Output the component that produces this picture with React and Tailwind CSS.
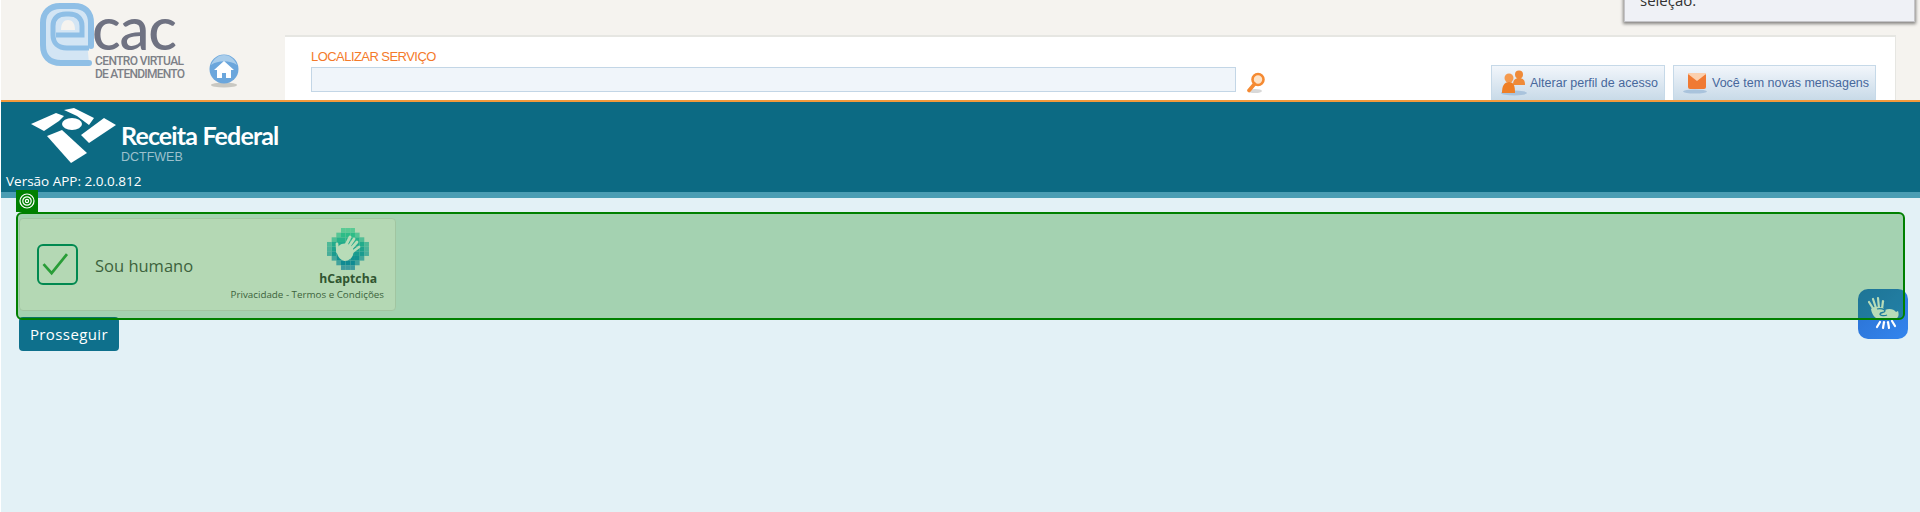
const hc = [
  "000111000",
  "001111100",
  "011111110",
  "111111111",
  "111111111",
  "111111111",
  "011111110",
  "001111100",
  "000111000",
];
const outer = (r, c) => r === 0 || c === 0 || c === 8 || r === 8 || (r === 1 && (c === 2 || c === 6)) || (r === 7 && (c === 2 || c === 6)) || (r === 2 && (c === 1 || c === 7)) || (r === 6 && (c === 1 || c === 7));

function HCaptchaLogo() {
  const colorFor = (r) => {
    const t = r / 8;
    return `rgb(${Math.round(70 - t * 55)},${Math.round(222 - t * 92)},${Math.round(185 + t * 20)})`;
  };
  return (
    <svg width="42" height="42" viewBox="0 0 42 42">
      {hc.map((row, r) =>
        row.split("").map((v, c) =>
          v === "1" ? (
            <rect key={`${r}-${c}`} x={c * 4.66} y={r * 4.66} width="4.66" height="4.66" fill={colorFor(r)} opacity={outer(r, c) ? 0.7 : 1} />
          ) : null
        )
      )}
      <g fill="none" stroke="#fff" strokeLinecap="round" strokeWidth="2.8">
        <path d="M10.5 24L10 16" />
        <path d="M18 19L23 9" />
        <path d="M21 20L27 11" />
        <path d="M23 22L30 14" />
        <path d="M24 25L32 19" />
      </g>
      <path d="M9.5 23c0-5 6-9 11-7 4 1 6 4 6 8 0 5-4 9-9 9-5-1-7-5-8-10z" fill="#fff" />
    </svg>
  );
}

function ELogo() {
  return (
    <svg width="56" height="66" viewBox="0 0 56 66" className="shrink-0">
      <path d="M50 61H22C10 61 4 54 4 43V21C4 10 11 4 21 4h14C46 4 52 10 52 21V46H30C20 50 12 44 12 34V20C14 10 44 10 46 20z" fill="#d3e5f4" />
      <path d="M50 61H22C10 61 4 54 4 43V21C4 10 11 4 21 4h14C46 4 52 10 52 21V44" fill="none" stroke="#8fbfe6" strokeWidth="6" strokeLinecap="round" />
      <path d="M50 46H28C19 46 14 41 14 33V24C14 16 19 12 27 12h3C38 12 43 16 43 24V33H17" fill="none" stroke="#8fbfe6" strokeWidth="5" />
      <path d="M22 28C22 21 25 18 29 18S36 21 36 28z" fill="#f5f3ef" />
    </svg>
  );
}

function HomeIcon() {
  return (
    <svg width="32" height="34" viewBox="0 0 32 34">
      <ellipse cx="16" cy="31" rx="13" ry="2.5" fill="#c9c8c2" />
      <circle cx="16" cy="15" r="14.5" fill="#6ba6dc" />
      <path d="M3 11C6 4 11 1 16 1s10 3 13 10c-7-5-19-5-26 0z" fill="#a9cdeb" />
      <path d="M16 7L6 16h3v8h5v-5h4v5h5v-8h3z" fill="#fff" />
    </svg>
  );
}

function SearchIcon() {
  return (
    <svg width="20" height="21" viewBox="0 0 20 21">
      <ellipse cx="9" cy="19" rx="7" ry="2" fill="#d8d8d8" />
      <circle cx="12" cy="7.5" r="5.5" fill="#fde3c8" stroke="#f58a32" strokeWidth="2.6" />
      <path d="M8.5 12L3 18.5" stroke="#f58a32" strokeWidth="3.6" strokeLinecap="round" />
    </svg>
  );
}

function PeopleIcon() {
  return (
    <svg width="28" height="26" viewBox="0 0 28 26">
      <ellipse cx="13" cy="23" rx="13" ry="2.5" fill="#a9c3dc" />
      <circle cx="18" cy="4.5" r="4" fill="#ef8a38" />
      <path d="M12 15c0-5 2-7 6-7s6 2 6 7z" fill="#ef8a38" />
      <circle cx="8" cy="8" r="4.5" fill="#f59a4e" />
      <path d="M1 23c0-7 2-11 7-11s6 4 6 11z" fill="#ef7f26" />
    </svg>
  );
}

function MailIcon() {
  return (
    <svg width="28" height="22" viewBox="0 0 28 22">
      <ellipse cx="12" cy="19.5" rx="12" ry="2" fill="#a9c3dc" />
      <rect x="5" y="1" width="18" height="16" rx="2" fill="#f07a33" />
      <path d="M5 2l9 7 9-7v-1H5z" fill="#fbd0ae" />
    </svg>
  );
}

function ReceitaLogo() {
  return (
    <svg width="90" height="56" viewBox="0 0 90 56" className="shrink-0">
      <g fill="#fff">
        <path d="M2 16L27 5l8 3-5 5-15 10z" />
        <path d="M35 2l10-2 20 10-5 7-12-9z" />
        <ellipse cx="43" cy="16" rx="10" ry="6" />
        <path d="M18 28l15-6 25 23-16 10z" />
        <path d="M52 27L75 10l12 7-27 18z" />
      </g>
    </svg>
  );
}

function VLibras() {
  return (
    <svg width="50" height="50" viewBox="0 0 50 50">
      <g stroke="#fff" strokeWidth="2.2" strokeLinecap="round" fill="none">
        <path d="M16 21L11 13" />
        <path d="M18 19L15 10" />
        <path d="M21 19L20 9" />
        <path d="M24 20L25 12" />
        <path d="M22 33L19 38" />
        <path d="M26 33L25 39" />
        <path d="M30 33L31 39" />
        <path d="M34 32L37 37" />
      </g>
      <path d="M13 20C16 17 24 17 27 21C31 19 36 20 38 23L40 22C41 25 41 28 38 30H22C17 30 14 26 13 20z" fill="#fff" />
      <path d="M19 20c3-1 8 0 8 2s-5 1-5 3 5 2 7 1" fill="none" stroke="#2a7ad8" strokeWidth="1.3" />
    </svg>
  );
}

export default function App() {
  return (
    <div className="relative h-[512px] w-[1920px] overflow-hidden bg-white pl-px font-['Open_Sans',sans-serif]">
      {/* Top portal bar */}
      <header className="flex h-[100px] bg-[#f5f3ef]">
        <div className="flex w-[284px] shrink-0 pl-[38px] pt-[2px]">
          <ELogo />
          <div className="flex w-[90px] shrink-0 flex-col">
            <span className="-ml-[3px] mt-[5px] font-['Lato',sans-serif] text-[60px] font-medium leading-[40px] tracking-[-1.2px] text-[#6f7282]">cac</span>
            <span className="mt-[8px] whitespace-nowrap font-['Roboto',sans-serif] text-[12px] font-medium leading-[13px] tracking-[-0.6px] text-[#7d8087]">CENTRO VIRTUAL</span>
            <span className="whitespace-nowrap font-['Roboto',sans-serif] text-[12px] font-medium leading-[13px] tracking-[-0.75px] text-[#7d8087]">DE ATENDIMENTO</span>
          </div>
          <div className="ml-[23px] mt-[52px] shrink-0">
            <HomeIcon />
          </div>
        </div>
        <div className="mr-[24px] mt-[35px] flex h-[65px] flex-1 border-r border-t-2 border-[#e6e6e2] bg-white pl-[26px] font-['Liberation_Sans',sans-serif]">
          <div className="w-[925px] pt-[12px]">
            <div className="text-[13px] leading-[15px] tracking-[-0.55px] text-[#f47a2a]">LOCALIZAR SERVIÇO</div>
            <div className="mt-[3px] h-[25px] border border-[#c3d6e6] bg-[#f0f5fa]" />
          </div>
          <div className="ml-[10px] mt-[35px]">
            <SearchIcon />
          </div>
          <div className="ml-auto mr-[19px] mt-[28px] flex gap-2">
            <div className="flex h-[35px] w-[174px] items-center border-x border-t border-[#c6d9e8] bg-gradient-to-b from-[#f2f6fb] to-[#c8dae8] pl-[9px] text-[12.5px] text-[#47689c]">
              <PeopleIcon />
              <span className="ml-[1px] whitespace-nowrap">Alterar perfil de acesso</span>
            </div>
            <div className="flex h-[35px] w-[203px] items-center border-x border-t border-[#c6d9e8] bg-gradient-to-b from-[#f2f6fb] to-[#c8dae8] pl-[9px] text-[12.5px] text-[#47689c]">
              <MailIcon />
              <span className="ml-[1px] whitespace-nowrap">Você tem novas mensagens</span>
            </div>
          </div>
        </div>
      </header>
      <div className="h-[2px] bg-[#f39a3c]" />

      {/* Teal application banner */}
      <div className="h-[90px] bg-[#0c6a83] pl-[28px] pt-[6px]">
        <div className="flex">
          <ReceitaLogo />
          <div className="ml-[2px] flex flex-col pt-[14px]">
            <span className="font-['Lato',sans-serif] text-[25px] font-bold leading-[27px] tracking-[-0.85px] text-white">Receita Federal</span>
            <span className="mt-[2px] font-['Liberation_Sans',sans-serif] text-[12.5px] leading-[13px] text-[#9cc1cd]">DCTFWEB</span>
          </div>
        </div>
        <div className="-ml-[23px] mt-[8px] text-[13.5px] font-medium leading-[18px] text-white">Versão APP: 2.0.0.812</div>
      </div>
      <div className="h-[6px] bg-[#4a9db3]" />

      {/* Content */}
      <main className="h-[314px] bg-[#e3f1f6] pl-[18px] pt-[20px]">
        <div className="relative flex h-[93px] w-[377px] items-center rounded-[4px] border border-[#e0e0e0] bg-[#fafafa]">
          <div className="ml-[17px] h-[41px] w-[41px] rounded-[6px] border-2 border-[#008c6f]">
            <svg viewBox="0 0 41 41" className="h-full w-full">
              <path d="M5 20l9 10 17-21" fill="none" stroke="#3aa84e" strokeWidth="3" />
            </svg>
          </div>
          <span className="ml-[17px] pt-[3px] text-[16.5px] text-[#555]">Sou humano</span>
          <div className="absolute right-[11px] top-[9px] flex flex-col items-end">
            <div className="flex flex-col items-center pr-[7px]">
              <HCaptchaLogo />
              <span className="mt-[1px] text-[12.2px] font-bold leading-[15px] text-[#444]">hCaptcha</span>
            </div>
            <span className="mt-[2px] whitespace-nowrap text-[9.8px] leading-[13px] text-[#555]">Privacidade - Termos e Condições</span>
          </div>
        </div>
        <button className="mt-[6px] block h-[34px] w-[100px] rounded-[4px] bg-[#0e708c] text-[15px] font-medium tracking-[0.4px] text-white">Prosseguir</button>
      </main>

      {/* Floating widget */}
      <div className="absolute left-[1858px] top-[289px] flex h-[50px] w-[50px] items-center justify-center rounded-[10px] bg-gradient-to-br from-[#2a70d0] to-[#3385ee]">
        <VLibras />
      </div>

      {/* Marked element overlay */}
      <div className="absolute left-[16px] top-[212px] h-[108px] w-[1889px] rounded-[6px] border-[2.5px] border-[#008000] bg-[#00800047]" />
      <div className="absolute left-[16px] top-[190px] flex h-[22px] w-[22px] items-center justify-center bg-[#008000]">
        <svg width="16" height="16" viewBox="0 0 16 16" fill="none" stroke="#fff">
          <circle cx="8" cy="8" r="7" strokeWidth="1.2" />
          <circle cx="8" cy="8" r="4.2" strokeWidth="1.2" />
          <circle cx="8" cy="8" r="1.6" strokeWidth="1.2" />
        </svg>
      </div>

      {/* Tooltip clipped at the top */}
      <div className="absolute left-[1624px] top-[-30px] h-[52px] w-[291px] border border-[#c4c4c8] bg-[#eff1f6] px-[15px] pt-[20px] text-[15px] leading-[18px] text-[#333] shadow-[0_1px_3px_1px_rgba(0,0,0,0.45)]">
        seleção.
      </div>
    </div>
  );
}
